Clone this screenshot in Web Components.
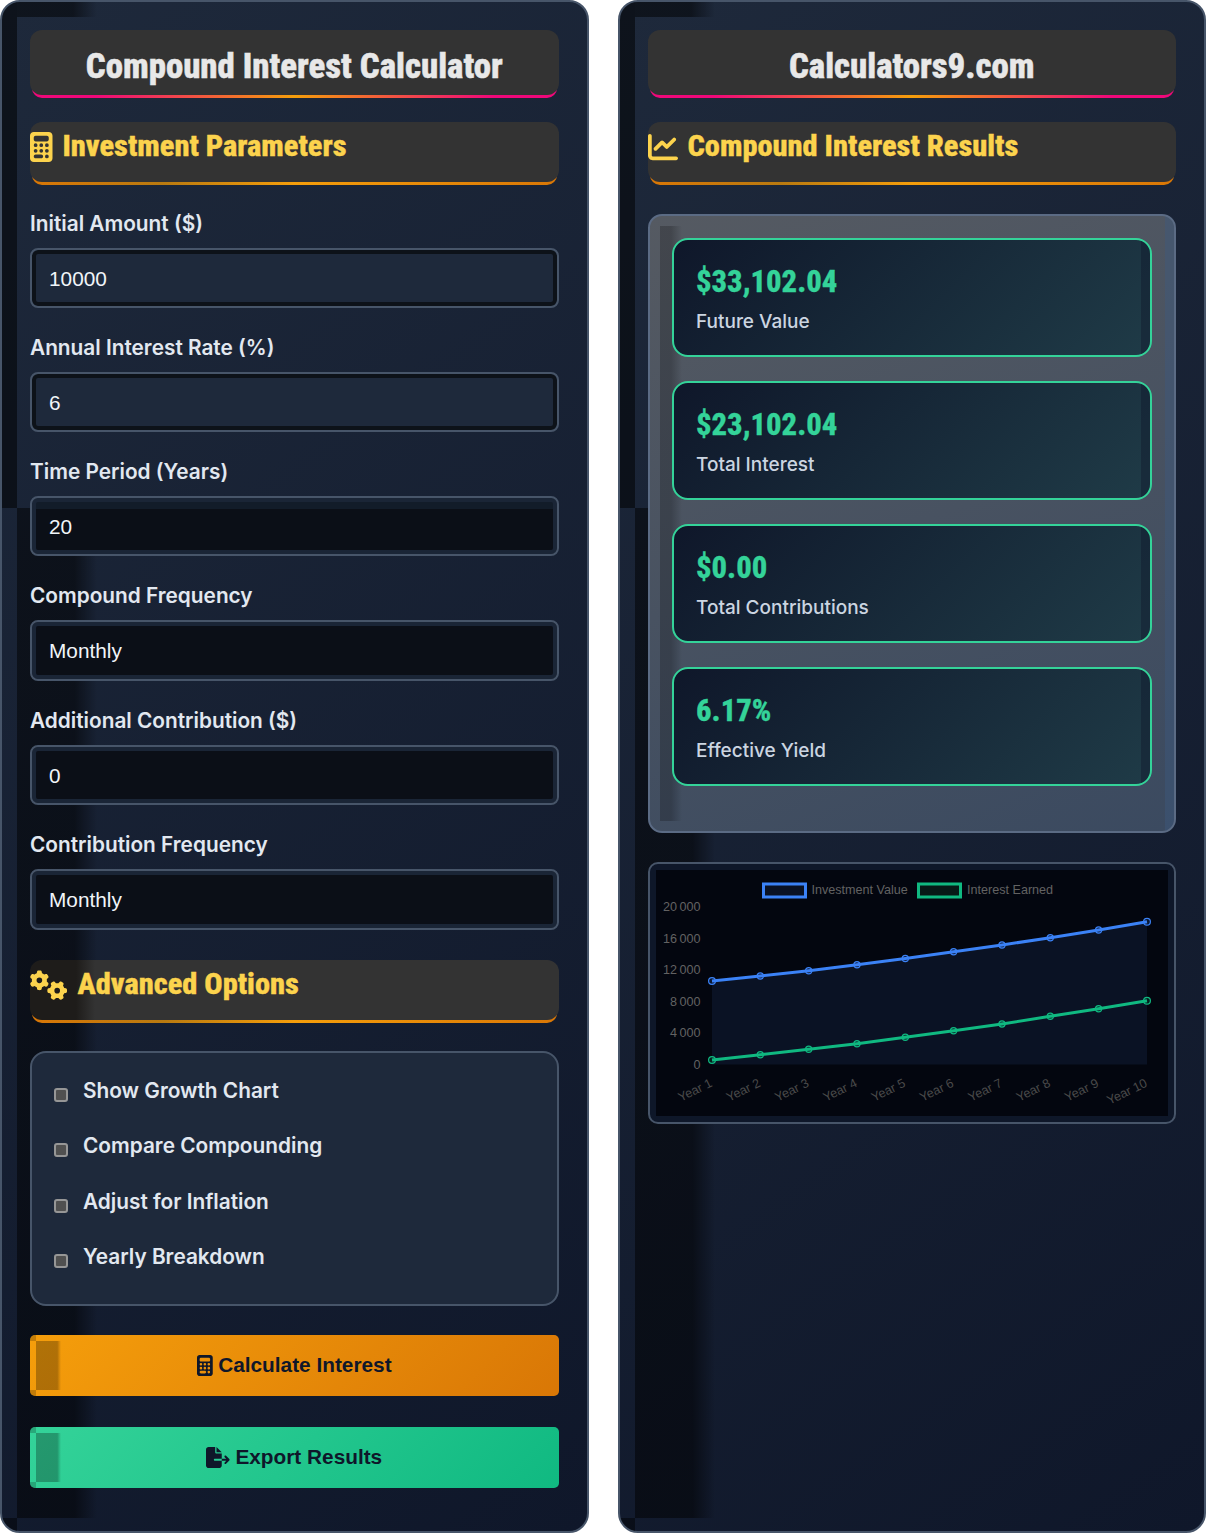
<!doctype html>
<html lang="en">
<head>
<meta charset="utf-8">
<title>Compound Interest Calculator</title>
<style>
    html, body { margin: 0; background: #fff; }
    body { font-family: Inter, "Liberation Sans", sans-serif; }
</style>
</head>
<body>
<calc-page>
    <calc-card>
        <title-box>Compound Interest Calculator</title-box>
        <section-head icon="calculator">Investment Parameters</section-head>
        <form-field label="Initial Amount ($)" value="10000"></form-field>
        <form-field label="Annual Interest Rate (%)" value="6"></form-field>
        <form-field label="Time Period (Years)" value="20" dark seam></form-field>
        <form-field label="Compound Frequency" value="Monthly" dark tall></form-field>
        <form-field label="Additional Contribution ($)" value="0" dark></form-field>
        <form-field label="Contribution Frequency" value="Monthly" dark tall></form-field>
        <section-head icon="gears" shaded>Advanced Options</section-head>
        <option-panel>
            <option-row>Show Growth Chart</option-row>
            <option-row>Compare Compounding</option-row>
            <option-row>Adjust for Inflation</option-row>
            <option-row>Yearly Breakdown</option-row>
        </option-panel>
        <action-button icon="calculator">Calculate Interest</action-button>
        <action-button icon="export" kind="green">Export Results</action-button>
    </calc-card>
    <calc-card>
        <title-box>Calculators9.com</title-box>
        <section-head icon="chart">Compound Interest Results</section-head>
        <result-panel>
            <result-card value="$33,102.04">Future Value</result-card>
            <result-card value="$23,102.04">Total Interest</result-card>
            <result-card value="$0.00">Total Contributions</result-card>
            <result-card value="6.17%">Effective Yield</result-card>
        </result-panel>
        <growth-chart></growth-chart>
    </calc-card>
</calc-page>
<script>
const ICONS = {
    calculator: '<svg viewBox="0 0 384 512" width="W" height="H"><path fill="currentColor" d="M64 0C28.7 0 0 28.7 0 64V448c0 35.3 28.7 64 64 64H320c35.3 0 64-28.7 64-64V64c0-35.3-28.7-64-64-64H64zM96 64H288c17.7 0 32 14.3 32 32v32c0 17.7-14.3 32-32 32H96c-17.7 0-32-14.3-32-32V96c0-17.7 14.3-32 32-32zm32 160a32 32 0 1 1 -64 0 32 32 0 1 1 64 0zM96 352a32 32 0 1 1 0-64 32 32 0 1 1 0 64zM64 416c0-17.7 14.3-32 32-32h96c17.7 0 32 14.3 32 32s-14.3 32-32 32H96c-17.7 0-32-14.3-32-32zM192 256a32 32 0 1 1 0-64 32 32 0 1 1 0 64zm32 64a32 32 0 1 1 -64 0 32 32 0 1 1 64 0zm64-64a32 32 0 1 1 0-64 32 32 0 1 1 0 64zm32 64a32 32 0 1 1 -64 0 32 32 0 1 1 64 0zM288 448a32 32 0 1 1 0-64 32 32 0 1 1 0 64z"/></svg>',
    chart: '<svg viewBox="0 0 512 512" width="W" height="H"><path fill="currentColor" d="M64 64c0-17.7-14.3-32-32-32S0 46.3 0 64V400c0 44.2 35.8 80 80 80H480c17.7 0 32-14.3 32-32s-14.3-32-32-32H80c-8.8 0-16-7.2-16-16V64zm406.6 86.6c12.5-12.5 12.5-32.8 0-45.3s-32.8-12.5-45.3 0L320 210.7l-57.4-57.4c-12.5-12.5-32.8-12.5-45.3 0l-112 112c-12.5 12.5-12.5 32.8 0 45.3s32.8 12.5 45.3 0L240 221.3l57.4 57.4c12.5 12.5 32.8 12.5 45.3 0l128-128z"/></svg>',
    gears: '<svg viewBox="0 0 640 512" width="W" height="H"><path fill="currentColor" d="M308.5 135.3c7.1-6.3 9.9-16.2 6.2-25c-2.3-5.3-4.8-10.5-7.6-15.5L304 89.4c-3-5-6.3-9.9-9.8-14.6c-5.7-7.6-15.7-10.1-24.7-7.1l-28.2 9.3c-10.7-8.8-23-16-36.2-20.9L199 27.1c-1.9-9.3-9.1-16.7-18.5-17.8C173.9 8.4 167.2 8 160.4 8h-.7c-6.8 0-13.5 .4-20.1 1.2c-9.4 1.1-16.6 8.6-18.5 17.8L115 56.1c-13.3 5-25.5 12.1-36.2 20.9L50.5 67.8c-9-3-19-.5-24.7 7.1c-3.5 4.7-6.8 9.6-9.9 14.6l-3 5.3c-2.8 5-5.3 10.2-7.6 15.6c-3.7 8.7-.9 18.6 6.2 25l22.2 19.8C32.6 161.9 32 168.9 32 176s.6 14.1 1.7 20.9L11.5 216.7c-7.1 6.3-9.9 16.2-6.2 25c2.3 5.3 4.8 10.5 7.6 15.6l3 5.2c3 5.1 6.3 9.9 9.9 14.6c5.7 7.6 15.7 10.1 24.7 7.1l28.2-9.3c10.7 8.8 23 16 36.2 20.9l6.1 29.1c1.9 9.3 9.1 16.7 18.5 17.8c6.7 .8 13.5 1.2 20.4 1.2s13.7-.4 20.4-1.2c9.4-1.1 16.6-8.6 18.5-17.8l6.1-29.1c13.3-5 25.5-12.1 36.2-20.9l28.2 9.3c9 3 19 .5 24.7-7.1c3.5-4.7 6.8-9.5 9.8-14.6l3.1-5.4c2.8-5 5.3-10.2 7.6-15.5c3.7-8.7 .9-18.6-6.2-25l-22.2-19.8c1.1-6.8 1.7-13.8 1.7-20.9s-.6-14.1-1.7-20.9l22.2-19.8zM112 176a48 48 0 1 1 96 0 48 48 0 1 1 -96 0zM504.7 500.5c6.3 7.1 16.2 9.9 25 6.2c5.3-2.3 10.5-4.8 15.5-7.6l5.4-3.1c5-3 9.9-6.3 14.6-9.8c7.6-5.7 10.1-15.7 7.1-24.7l-9.3-28.2c8.8-10.7 16-23 20.9-36.2l29.1-6.1c9.3-1.9 16.7-9.1 17.8-18.5c.8-6.7 1.2-13.5 1.2-20.4s-.4-13.7-1.2-20.4c-1.1-9.4-8.6-16.6-17.8-18.5L583.9 307c-5-13.3-12.1-25.5-20.9-36.2l9.3-28.2c3-9 .5-19-7.1-24.7c-4.7-3.5-9.6-6.8-14.6-9.9l-5.3-3c-5-2.8-10.2-5.3-15.6-7.6c-8.7-3.7-18.6-.9-25 6.2l-19.8 22.2c-6.8-1.1-13.8-1.7-20.9-1.7s-14.1 .6-20.9 1.7l-19.8-22.2c-6.3-7.1-16.2-9.9-25-6.2c-5.3 2.3-10.5 4.8-15.6 7.6l-5.2 3c-5.1 3-9.9 6.3-14.6 9.9c-7.6 5.7-10.1 15.7-7.1 24.7l9.3 28.2c-8.8 10.7-16 23-20.9 36.2L315.1 313c-9.3 1.9-16.7 9.1-17.8 18.5c-.8 6.7-1.2 13.5-1.2 20.4s.4 13.7 1.2 20.4c1.1 9.4 8.6 16.6 17.8 18.5l29.1 6.1c5 13.3 12.1 25.5 20.9 36.2l-9.3 28.2c-3 9-.5 19 7.1 24.7c4.7 3.5 9.5 6.8 14.6 9.8l5.4 3.1c5 2.8 10.2 5.3 15.5 7.6c8.7 3.7 18.6 .9 25-6.2l19.8-22.2c6.8 1.1 13.8 1.7 20.9 1.7s14.1-.6 20.9-1.7l19.8 22.2zM464 304a48 48 0 1 1 0 96 48 48 0 1 1 0-96z"/></svg>',
    export: '<svg viewBox="0 0 576 512" width="W" height="H"><path fill="currentColor" d="M0 64C0 28.7 28.7 0 64 0H224V128c0 17.7 14.3 32 32 32H384V288H216c-13.3 0-24 10.7-24 24s10.7 24 24 24H384V448c0 35.3-28.7 64-64 64H64c-35.3 0-64-28.7-64-64V64zM384 336V288H494.1l-39-39c-9.4-9.4-9.4-24.6 0-33.9s24.6-9.4 33.9 0l80 80c9.4 9.4 9.4 24.6 0 33.9l-80 80c-9.4 9.4-24.6 9.4-33.9 0s-9.4-24.6 0-33.9l39-39H384zm0-208H256V0L384 128z"/></svg>'
}

function icon (name, height) {
    const ratio = { calculator: 0.75, chart: 1, gears: 1.25, export: 1.125 }[name]
    return ICONS[name].replace('"W"', `"${height * ratio}"`).replace('"H"', `"${height}"`)
}

class CalcPage extends HTMLElement {
    constructor () {
        super()
        this.attachShadow({ mode: 'open' })
        this.shadowRoot.innerHTML = `
            <style>
                :host { display: grid; grid-template-columns: 588.5px 588.5px; gap: 29px; width: 1206px; height: 1533px; }
            </style>
            <slot></slot>
        `
    }
}

class CalcCard extends HTMLElement {
    constructor () {
        super()
        this.attachShadow({ mode: 'open' })
        this.shadowRoot.innerHTML = `
            <style>
                :host {
                    display: block;
                    position: relative;
                    box-sizing: border-box;
                    height: 1533px;
                    padding: 28px;
                    border: 2px solid #475569;
                    border-radius: 20px;
                    overflow: hidden;
                    background: linear-gradient(145deg, #1e293b, #0f172a);
                }
                .content { position: relative; }
                .shade { position: absolute; pointer-events: none; }
                .left { left: 0; top: 0; width: 15px; height: 506px; background: rgba(0, 0, 0, 0.52); }
                .top { left: 15px; top: 0; width: 80px; height: 15px; background: linear-gradient(90deg, rgba(0, 0, 0, 0.5) 70%, transparent); }
                .band {
                    left: 15px; top: 506px; bottom: 13px; width: 80px;
                    background: linear-gradient(90deg, rgba(0, 0, 0, 0.5) 72%, transparent);
                }
                .corner { left: 0; bottom: 0; width: 15px; height: 13px; background: rgba(0, 0, 0, 0.45); }
            </style>
            <div class="shade left"></div>
            <div class="shade top"></div>
            <div class="shade band"></div>
            <div class="shade corner"></div>
            <div class="content"><slot></slot></div>
        `
    }
}

class TitleBox extends HTMLElement {
    constructor () {
        super()
        this.attachShadow({ mode: 'open' })
        this.shadowRoot.innerHTML = `
            <style>
                :host { display: block; position: relative; height: 68px; margin-bottom: 24px; }
                .line {
                    position: absolute; left: 2px; right: 2px; bottom: 0; height: 14px;
                    border-radius: 0 0 10px 10px;
                    background: linear-gradient(90deg, #f0087a 12%, #f59e0b 50%, #f0087a 88%);
                }
                .box {
                    position: relative;
                    height: 65px;
                    border-radius: 12px;
                    background: #333;
                    color: #e8e8e8;
                    text-align: center;
                    font: 800 34.8px/72px "Roboto Condensed", Roboto, sans-serif;
                    font-stretch: condensed;
                    -webkit-text-stroke: 0.5px #e8e8e8;
                }
            </style>
            <div class="line"></div>
            <div class="box"><slot></slot></div>
        `
    }
}

class SectionHead extends HTMLElement {
    constructor () {
        super()
        this.attachShadow({ mode: 'open' })
        const name = this.getAttribute('icon')
        const fill = this.hasAttribute('shaded') ? 'linear-gradient(90deg, #1e1c1a 46px, #333 65px)' : '#333'
        this.shadowRoot.innerHTML = `
            <style>
                :host { display: block; position: relative; height: 63px; margin-bottom: 28px; }
                .line {
                    position: absolute; left: 2px; right: 2px; bottom: 0; height: 14px;
                    border-radius: 0 0 10px 10px;
                    background: linear-gradient(90deg, #d97706, #b97a10 25%, #f59e0b 50%, #d97706);
                }
                .box {
                    position: relative;
                    height: 60px;
                    border-radius: 12px;
                    background: ${fill};
                    color: #fcd34d;
                    display: flex;
                    align-items: flex-start;
                    gap: 10px;
                    font: 800 30.4px/48px "Roboto Condensed", Roboto, sans-serif;
                    font-stretch: condensed;
                    -webkit-text-stroke: 0.4px #fcd34d;
                }
                svg { display: block; flex: none; margin-top: 10px; }
            </style>
            <div class="line"></div>
            <div class="box">${icon(name, 30)}<span><slot></slot></span></div>
        `
    }
}

class FormField extends HTMLElement {
    constructor () {
        super()
        this.attachShadow({ mode: 'open' })
        const dark = this.hasAttribute('dark')
        const tall = this.hasAttribute('tall')
        const seam = this.hasAttribute('seam')
        this.shadowRoot.innerHTML = `
            <style>
                :host { display: block; margin-bottom: 29px; }
                :host(:last-of-type) { margin-bottom: 30px; }
                label { display: block; color: #e2e8f0; font: 600 20.8px/21px Inter, sans-serif; margin-bottom: 14px; }
                .control {
                    box-sizing: border-box;
                    height: ${tall ? 61 : 60}px;
                    border: 2px solid #475569;
                    border-radius: 8px;
                    padding: 0 17px;
                    color: #f1f5f9;
                    background: ${seam ? 'linear-gradient(#121c29 11px, #0b0f17 11px)' : dark ? '#0b0f17' : '#1e293b'};
                    box-shadow: inset 0 0 0 4px ${dark ? '#1a2536' : '#0d1219'};
                    font: 400 20.8px/${tall ? 57 : 56}px "Liberation Sans", Arial, sans-serif;
                }
                .control span { position: relative; top: ${tall ? 0 : 1}px; }
            </style>
            <label>${this.getAttribute('label')}</label>
            <div class="control"><span>${this.getAttribute('value')}</span></div>
        `
    }
}

class OptionPanel extends HTMLElement {
    constructor () {
        super()
        this.attachShadow({ mode: 'open' })
        this.shadowRoot.innerHTML = `
            <style>
                :host {
                    display: block;
                    box-sizing: border-box;
                    height: 255px;
                    margin-bottom: 29px;
                    padding: 12px 22px;
                    border: 2px solid #475569;
                    border-radius: 16px;
                    background: #1e293b;
                }
            </style>
            <slot></slot>
        `
    }
}

class OptionRow extends HTMLElement {
    constructor () {
        super()
        this.attachShadow({ mode: 'open' })
        this.shadowRoot.innerHTML = `
            <style>
                :host { display: flex; align-items: center; gap: 15px; height: 55.5px; color: #e2e8f0; font: 600 20.8px/26px Inter, sans-serif; }
                .check {
                    flex: none;
                    width: 14px; height: 14px; box-sizing: border-box; margin-top: 4px;
                    border: 2.5px solid #969696; border-radius: 3px; background: #505050;
                }
                .label { position: relative; top: -2px; }
            </style>
            <div class="check"></div>
            <div class="label"><slot></slot></div>
        `
    }
}

class ActionButton extends HTMLElement {
    constructor () {
        super()
        this.attachShadow({ mode: 'open' })
        const green = this.getAttribute('kind') === 'green'
        this.shadowRoot.innerHTML = `
            <style>
                :host {
                    display: flex;
                    position: relative;
                    align-items: center;
                    justify-content: center;
                    gap: 5.5px;
                    height: 60.5px;
                    margin-bottom: 31.5px;
                    border-radius: 5px;
                    overflow: hidden;
                    color: #0f172a;
                    background: ${green ? 'linear-gradient(135deg, #34d399, #10b981)' : 'linear-gradient(135deg, #f59e0b, #d97706)'};
                    font: 700 20.8px/26px "Liberation Sans", Arial, sans-serif;
                }
                .shade {
                    position: absolute; left: 6px; top: 6px; bottom: 6px; width: 25px;
                    background: linear-gradient(90deg, rgba(0, 0, 0, 0.28) 85%, transparent);
                }
                .edge { position: absolute; left: 0; width: 6px; height: 6px; background: rgba(0, 0, 0, 0.2); }
                .edge.t { top: 0; }
                .edge.b { bottom: 0; }
                svg { display: block; }
            </style>
            <div class="shade"></div>
            <div class="edge t"></div>
            <div class="edge b"></div>
            ${icon(this.getAttribute('icon'), 21)}<span><slot></slot></span>
        `
    }
}

class ResultPanel extends HTMLElement {
    constructor () {
        super()
        this.attachShadow({ mode: 'open' })
        this.shadowRoot.innerHTML = `
            <style>
                :host {
                    display: flex;
                    position: relative;
                    flex-direction: column;
                    gap: 24px;
                    box-sizing: border-box;
                    height: 619px;
                    margin-top: 28.5px;
                    margin-bottom: 29.5px;
                    padding: 22px;
                    padding-top: 22.5px;
                    border: 2px solid #5b6b84;
                    border-radius: 14px;
                    overflow: hidden;
                    background: linear-gradient(160deg, #555a62, #3b4a60);
                }
                .strip {
                    position: absolute; left: 10px; top: 10px; bottom: 10px; width: 22px;
                    background: linear-gradient(90deg, rgba(0, 0, 0, 0.22) 50%, transparent);
                }
                .right { position: absolute; right: 0; top: 0; bottom: 0; width: 9px; background: rgba(60, 90, 130, 0.4); }
            </style>
            <div class="strip"></div>
            <div class="right"></div>
            <slot></slot>
        `
    }
}

class ResultCard extends HTMLElement {
    constructor () {
        super()
        this.attachShadow({ mode: 'open' })
        this.shadowRoot.innerHTML = `
            <style>
                :host {
                    display: block;
                    position: relative;
                    box-sizing: border-box;
                    height: 119px;
                    padding: 24px 22.5px;
                    border: 2px solid #34d399;
                    border-radius: 16px;
                    overflow: hidden;
                    background: linear-gradient(135deg, #0f172a, #1f3b47);
                }
                .value {
                    color: #34d399;
                    font: 800 30.6px/36px "Roboto Condensed", Roboto, sans-serif;
                    font-stretch: condensed;
                    -webkit-text-stroke: 0.3px #34d399;
                }
                .name { margin-top: 9px; color: #cbd5e1; font: 500 19px/26px Inter, sans-serif; }
                .edge { position: absolute; right: 0; top: 0; bottom: 0; width: 9px; background: rgba(15, 23, 42, 0.4); }
            </style>
            <div class="edge"></div>
            <div class="value">${this.getAttribute('value')}</div>
            <div class="name"><slot></slot></div>
        `
    }
}

class GrowthChart extends HTMLElement {
    constructor () {
        super()
        this.attachShadow({ mode: 'open' })
        const blue = [981, 976, 970.7, 964.7, 958.5, 951.7, 945, 937.7, 930, 921.7]
        const green = [1060, 1054.7, 1049.3, 1043.7, 1037.3, 1030.7, 1024, 1016.3, 1008.7, 1000.7]
        const xAt = i => 64 + i * 48.33
        const line = ys => ys.map((y, i) => `${xAt(i).toFixed(1)},${(y - 862).toFixed(1)}`).join(' ')
        const dots = (ys, color) => ys.map((y, i) => {
            const r = i === 0 || i === 9 ? 3.4 : 3.1
            return `<circle cx="${xAt(i).toFixed(1)}" cy="${(y - 862).toFixed(1)}" r="${r}" fill="${color}" fill-opacity="0.15" stroke="${color}" stroke-width="1.2"/>`
        }).join('')
        const ticks = [['20\u2009000', 906], ['16\u2009000', 938], ['12\u2009000', 969.5], ['8\u2009000', 1001], ['4\u2009000', 1032.5], ['0', 1064]]
        const yLabels = ticks.map(t => `<text x="52.5" y="${t[1] - 862 + 4.5}" text-anchor="end">${t[0]}</text>`).join('')
        const xLabels = blue.map((y, i) => {
            return `<text class="dim" text-anchor="end" transform="translate(${(xAt(i) + 1).toFixed(1)} 224) rotate(-26)">Year ${i + 1}</text>`
        }).join('')
        this.shadowRoot.innerHTML = `
            <style>
                :host {
                    display: block;
                    box-sizing: border-box;
                    height: 262px;
                    border: 2px solid #475569;
                    border-radius: 10px;
                    overflow: hidden;
                    background: #0e1729;
                }
                svg { display: block; position: relative; left: -2px; top: -2px; }
                text { font: 12.6px "Liberation Sans", Arial, sans-serif; fill: #626262; }
                text.dim { fill: #4a4a4a; }
            </style>
            <svg width="528" height="262" viewBox="0 0 528 262">
                <rect x="8" y="8" width="512" height="246" fill="#03060f"/>
                <polygon points="64,202.5 ${line(blue)} 499,202.5" fill="#0a1224"/>
                <rect x="115.5" y="22" width="42" height="13" fill="#0a1224" stroke="#3b82f6" stroke-width="3"/>
                <text x="163.5" y="32">Investment Value</text>
                <rect x="270.5" y="22" width="42" height="13" fill="#071a17" stroke="#10b981" stroke-width="3"/>
                <text x="319" y="32">Interest Earned</text>
                ${yLabels}
                ${xLabels}
                <polyline points="${line(blue)}" fill="none" stroke="#3b82f6" stroke-width="3"/>
                <polyline points="${line(green)}" fill="none" stroke="#10b981" stroke-width="3"/>
                ${dots(blue, '#3b82f6')}
                ${dots(green, '#10b981')}
            </svg>
        `
    }
}

customElements.define('calc-page', CalcPage)
customElements.define('calc-card', CalcCard)
customElements.define('title-box', TitleBox)
customElements.define('section-head', SectionHead)
customElements.define('form-field', FormField)
customElements.define('option-panel', OptionPanel)
customElements.define('option-row', OptionRow)
customElements.define('action-button', ActionButton)
customElements.define('result-panel', ResultPanel)
customElements.define('result-card', ResultCard)
customElements.define('growth-chart', GrowthChart)
</script>
</body>
</html>
